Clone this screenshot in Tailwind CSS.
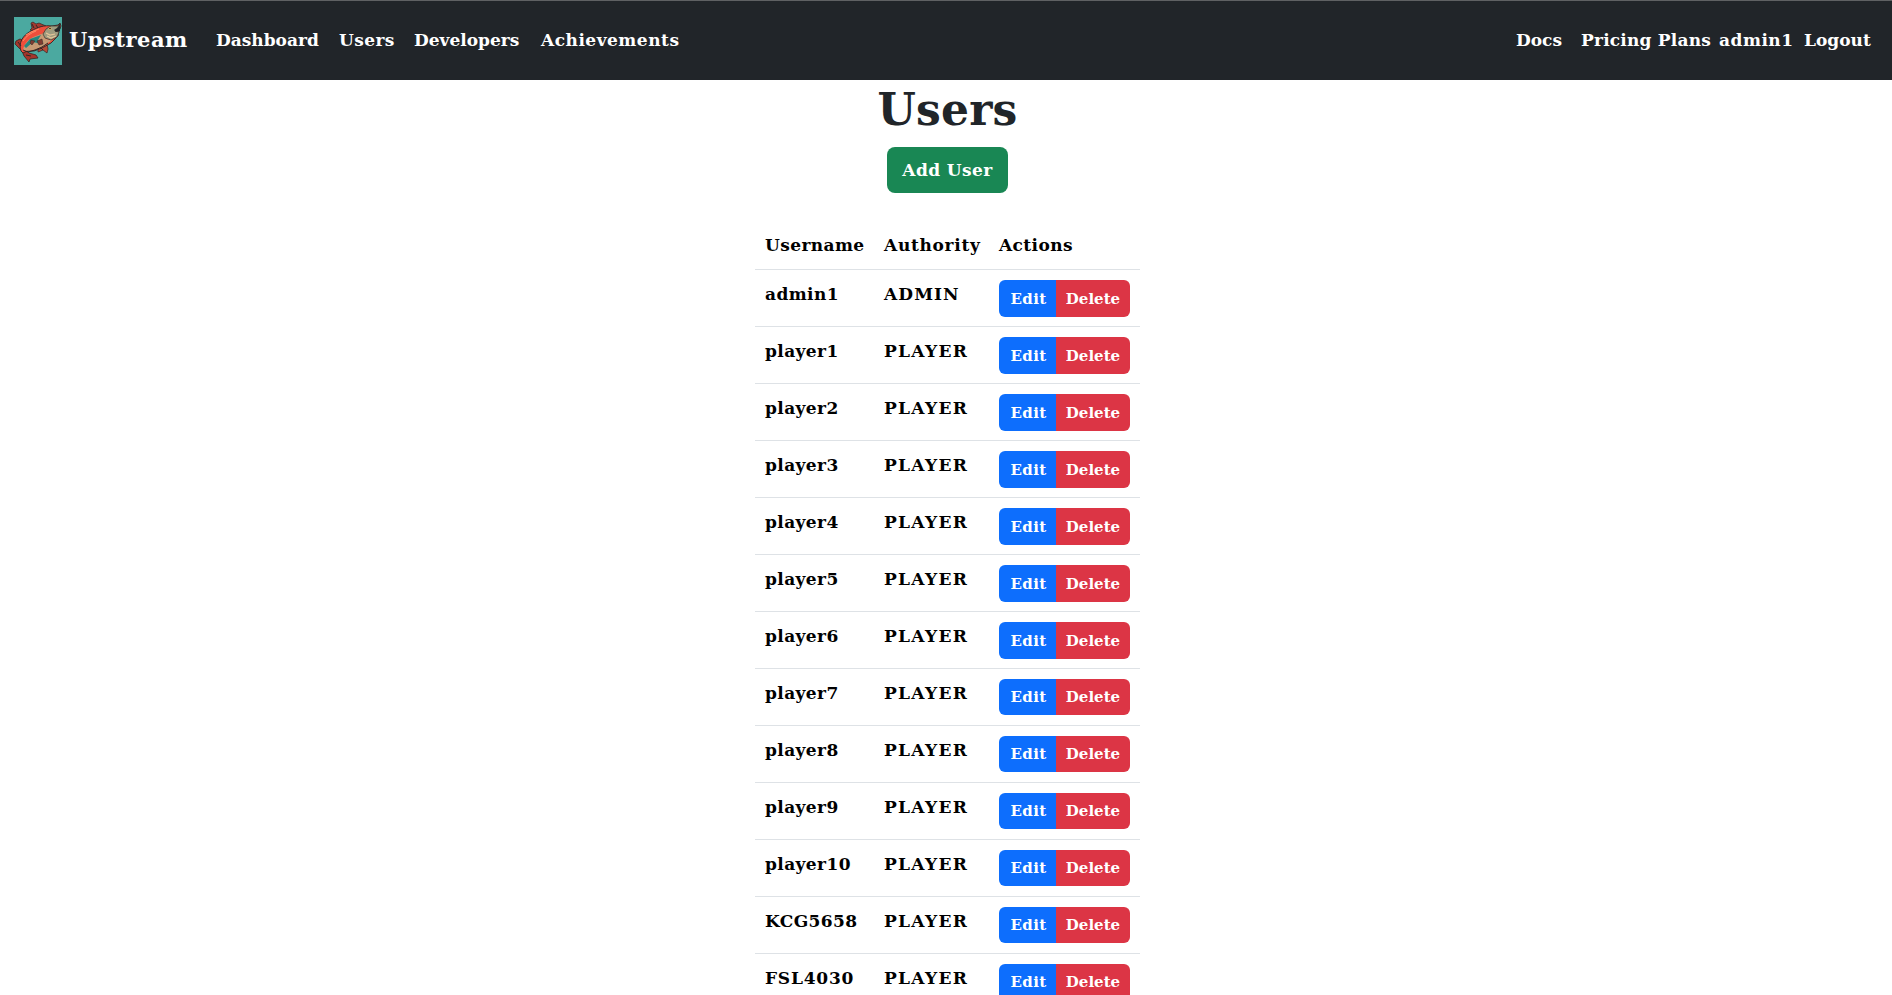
<!DOCTYPE html>
<html lang="en">
<head>
<meta charset="utf-8">
<title>Upstream - Users</title>
<script src="https://cdn.jsdelivr.net/npm/@tailwindcss/browser@4"></script>
</head>
<body class="h-[995px] overflow-hidden bg-white font-['DejaVu_Serif',serif] font-bold text-[17px] leading-6 text-[#212529]">
<nav class="flex h-20 items-center border-t border-[#5f6163] bg-[#212529] pb-[2px] pl-[14px] text-white whitespace-nowrap">
  <a class="flex w-[202px] items-center gap-[7px] pt-[2px] text-[21px]">
    <svg class="size-12 shrink-0" viewBox="0 0 48 48">
      <rect width="48" height="48" fill="#4ba9a0"/>
      <path d="M16 13 18 11 17 6 19 5 22 7 25 6 32 9 34 11 24 15Z" fill="#a53a2f" stroke="#3a2422" stroke-width=".7"/>
      <path d="M24 31 24 35 29 33 33 36 34 32 33 27 36 23Z" fill="#b84a37" stroke="#3a2422" stroke-width=".7"/>
      <path d="M8 34 10 39 15 45 16 42 24 41 22 38 15 36 10 31 7 28 9 23 6 22 2 24 1 27 5 31Z" fill="#a5352b" stroke="#3a2422" stroke-width=".8"/>
      <path d="M7 34C4 26 9 18 17 14 24 10 30 8 38 9L44 8 46 6 47 9 45 14 44 19 37 26 28 31 20 34 13 34 9 36Z" fill="#ef4e3b" stroke="#2b2726" stroke-width=".9"/>
      <path d="M9 33C10 27 15 21 22 19L30 16 32 22 38 23 30 29 20 33 11 34Z" fill="#c79a74"/>
      <path d="M10 29 16 22 27 18 24 23 27 27 19 25 12 31Z" fill="#26857e"/>
      <path d="M17 23 21 24 18 28 16 26ZM23 24 28 22 29 27 25 28Z" fill="#803b31" stroke="#2b2726" stroke-width=".5"/>
      <path d="M32 12 37 9 44 9 46 7 46 12 41 14 45 15 43 20 37 23 31 21 29 17Z" fill="#9f9b7f" stroke="#37322c" stroke-width=".7"/>
      <path d="M40 13 43 11 46 7 46 14 42 15Z" fill="#24282a"/>
      <path d="M32 16 36 18 41 17M33 19 37 21 42 19" fill="none" stroke="#e5c69a" stroke-width="1.2"/>
      <circle cx="36" cy="11.500" r="1.500" fill="#ddb063"/><circle cx="36" cy="11.500" r=".8" fill="#171b1d"/>
      <path d="M9 24C12 19 17 16 22 14M12 18 17 15 25 12" fill="none" stroke="#ff8a65" stroke-width="1"/>
      <path d="M9 33 14 35 21 33 28 30 34 26M12 38 17 39M4 25 7 29M27 31 29 33M18 7 20 11M22 8 24 11" fill="none" stroke="#2d2926" stroke-width="1"/>
    </svg>
    <span class="-mt-[2px] tracking-[0.5px]">Upstream</span>
  </a>
  <a class="w-[123px]">Dashboard</a>
  <a class="w-[75px] tracking-[0.4px]">Users</a>
  <a class="w-[127px]">Developers</a>
  <a class="tracking-[0.5px]">Achievements</a>
  <div class="ml-auto flex w-[376px]">
    <a class="w-[65px]">Docs</a>
    <a class="w-[138px] tracking-[0.2px]">Pricing Plans</a>
    <a class="w-[85px] tracking-[0.5px]">admin1</a>
    <a>Logout</a>
  </div>
</nav>
<main class="flex flex-col items-center pl-[3px]">
  <h1 class="mt-[3px] h-[64px] text-[44px] leading-[54px] tracking-[0.2px]">Users</h1>
  <button class="h-[46px] w-[121px] rounded-lg bg-[#198754] text-white tracking-[0.4px] whitespace-nowrap">Add User</button>
  <div class="mt-[28px] w-[385px] whitespace-nowrap text-black">
    <div class="flex h-[49px] border-b border-[#dee2e6] px-[10px] pt-[12px]">
      <div class="w-[119px] tracking-[0.4px]">Username</div><div class="w-[115px] tracking-[0.7px]">Authority</div><div class="tracking-[0.4px]">Actions</div>
    </div>
    <div id="rows"></div>
  </div>
</main>
<script>
const names = ['admin1','player1','player2','player3','player4','player5','player6','player7','player8','player9','player10','KCG5658','FSL4030'];
document.getElementById('rows').innerHTML = names.map((name, i) => `
  <div class="flex h-[57px] border-b border-[#dee2e6] px-[10px] pt-[10px]">
    <div class="w-[119px] pt-[2px] ${i === 12 ? 'tracking-[0.8px]' : 'tracking-[0.4px]'}">${name}</div>
    <div class="w-[115px] pt-[2px] ${i ? 'tracking-[1.3px]' : 'tracking-[1.1px]'}">${i ? 'PLAYER' : 'ADMIN'}</div>
    <div class="flex ${i < 7 ? 'h-[37px]' : 'h-[36px]'} overflow-hidden rounded-md text-[15px] text-white">
      <button class="w-[57px] bg-[#0d6efd] pl-[2px] tracking-[0.4px]">Edit</button><button class="w-[74px] bg-[#dc3545]">Delete</button>
    </div>
  </div>`).join('');
</script>
</body>
</html>
